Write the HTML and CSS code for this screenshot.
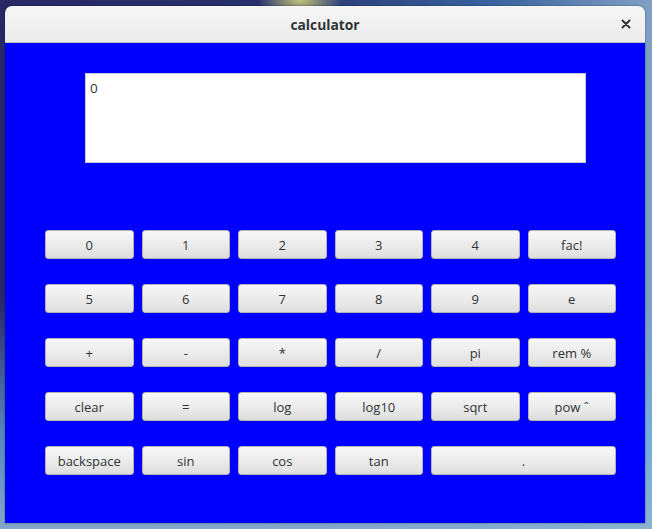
FILE: index.html
```html
<!DOCTYPE html>
<html>
<head>
<meta charset="utf-8">
<link rel="stylesheet" href="styles.css">
</head>
<body>
<div class="window">
  <div class="titlebar">
    <span class="title">calculator</span>
    <span class="close">
      <svg width="10" height="10" viewBox="0 0 10 10"><path d="M1.5 1.5 L8.5 8.5 M8.5 1.5 L1.5 8.5" stroke="#2e3436" stroke-width="2" stroke-linecap="round"/></svg>
    </span>
  </div>
  <div class="content">
    <div class="display">0</div>
    <div class="keys">
      <button class="key">0</button>
      <button class="key">1</button>
      <button class="key">2</button>
      <button class="key">3</button>
      <button class="key">4</button>
      <button class="key">fac!</button>
      <button class="key">5</button>
      <button class="key">6</button>
      <button class="key">7</button>
      <button class="key">8</button>
      <button class="key">9</button>
      <button class="key">e</button>
      <button class="key">+</button>
      <button class="key">-</button>
      <button class="key">*</button>
      <button class="key">/</button>
      <button class="key">pi</button>
      <button class="key">rem %</button>
      <button class="key">clear</button>
      <button class="key">=</button>
      <button class="key">log</button>
      <button class="key">log10</button>
      <button class="key">sqrt</button>
      <button class="key">pow ˆ</button>
      <button class="key">backspace</button>
      <button class="key">sin</button>
      <button class="key">cos</button>
      <button class="key">tan</button>
      <button class="key wide">.</button>
    </div>
  </div>
</div>
</body>
</html>
```

FILE: styles.css
```css
html, body {
  margin: 0;
  height: 100%;
}
body {
  width: 652px;
  height: 529px;
  overflow: hidden;
  box-sizing: border-box;
  padding: 6px 7px 6px 5px;
  background:
    radial-gradient(ellipse 60px 30px at 300px 0px, rgba(230,230,120,0.8), rgba(230,230,120,0) 70%),
    linear-gradient(90deg, rgba(40,40,100,1) 0%, rgba(40,50,110,0.9) 40%, rgba(60,120,180,0.7) 75%, rgba(150,190,220,0.8) 100%),
    #2a2a66;
  font-family: "Open Sans", "Noto Sans", sans-serif;
}
body::before {
  content: "";
  position: fixed;
  left: 0; right: 0; top: 300px; bottom: 0;
  background: linear-gradient(180deg, rgba(100,170,220,0) 0%, rgba(110,180,225,0.7) 60%, rgba(140,180,210,0.9) 100%);
  z-index: -1;
}
.window {
  width: 640px;
  height: 517px;
  display: flex;
  flex-direction: column;
  border-radius: 7px 7px 0 0;
  overflow: hidden;
  box-shadow: 0 0 2px rgba(0,0,0,0.5);
}
.titlebar {
  height: 36px;
  flex: none;
  background: linear-gradient(180deg, #f6f6f6, #ebebeb);
  border-bottom: 1px solid #bfbfbf;
  display: flex;
  align-items: center;
  justify-content: center;
  position: relative;
}
.title {
  font-family: "Open Sans", "Noto Sans", sans-serif;
  font-weight: bold;
  font-size: 13.8px;
  color: #2e3436;
}
.close {
  position: absolute;
  right: 14px;
  top: 13px;
  width: 10px;
  height: 10px;
  display: flex;
}
.content {
  flex: 1;
  background: #0000ff;
  padding: 30px 29px 0 40px;
}
.display {
  margin-left: 40px;
  width: 501px;
  height: 90px;
  background: #fff;
  border: 1px solid #c8c8d0;
  font-size: 13.5px;
  color: #2e3436;
  padding: 6px 4px;
  box-sizing: border-box;
  line-height: 16px;
}
.keys {
  margin-top: 67px;
  display: grid;
  grid-template-columns: repeat(6, 1fr);
  column-gap: 8px;
  row-gap: 25px;
  width: 571px;
}
.key {
  height: 29px;
  margin: 0;
  padding: 0;
  border: 1px solid #b3b3b3;
  border-radius: 3px;
  background: linear-gradient(180deg, #f7f7f7 0%, #e9e9e9 60%, #dddddd 100%);
  font-family: "Open Sans", "Noto Sans", sans-serif;
  font-size: 13px;
  color: #2e3436;
  box-shadow: 0 1px 0 rgba(0,0,0,0.08);
}
.wide {
  grid-column: span 2;
}
```
